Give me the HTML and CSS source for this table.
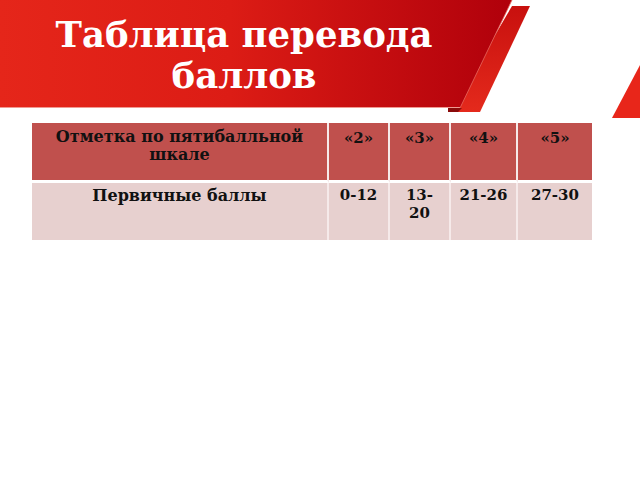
FILE: index.html
```html
<!DOCTYPE html>
<html lang="ru">
<head>
<meta charset="utf-8">
<link rel="stylesheet" href="styles.css">
</head>
<body>
<div class="slide">
  <header class="banner">
    <svg class="banner-bg" width="640" height="120" viewBox="0 0 640 120" aria-hidden="true">
      <defs>
        <linearGradient id="g" x1="0" y1="0" x2="1" y2="0">
          <stop offset="0" stop-color="#e5261a"/>
          <stop offset="0.45" stop-color="#dc1c15"/>
          <stop offset="1" stop-color="#b0000b"/>
        </linearGradient>
        <linearGradient id="g2" x1="0" y1="0" x2="0" y2="1">
          <stop offset="0" stop-color="#c8100e"/>
          <stop offset="1" stop-color="#e42a1c"/>
        </linearGradient>
      </defs>
      <polygon points="512,6 530,6 480,112 450,112" fill="url(#g2)"/>
      <polygon points="448,108 462,108 458,112 448,112" fill="#8a0a0a"/>
      <polygon points="0,0 512,0 460,108 0,108" fill="url(#g)"/>
      <line x1="0" y1="107.5" x2="460" y2="107.5" stroke="#f09a92" stroke-width="1"/>
      <line x1="512" y1="0" x2="460" y2="108" stroke="#e86a60" stroke-width="0.8"/>
      <polygon points="640,65 640,118 612,118" fill="#e8261a"/>
    </svg>
    <h1 class="title">Таблица перевода баллов</h1>
  </header>
  <table class="scores">
    <colgroup>
      <col class="c1"><col class="c2"><col class="c3"><col class="c4"><col class="c5">
    </colgroup>
    <tr class="head">
      <td class="label">Отметка по пятибалльной шкале</td>
      <td>«2»</td>
      <td>«3»</td>
      <td>«4»</td>
      <td>«5»</td>
    </tr>
    <tr class="data">
      <td class="label">Первичные баллы</td>
      <td>0-12</td>
      <td>13-20</td>
      <td>21-26</td>
      <td>27-30</td>
    </tr>
  </table>
</div>
</body>
</html>
```
FILE: styles.css
```css
html, body {
  margin: 0;
  padding: 0;
  background: #ffffff;
}
.slide {
  width: 640px;
  height: 480px;
  overflow: hidden;
  font-family: "DejaVu Serif", "Liberation Serif", serif;
}
.banner {
  position: relative;
  height: 108px;
}
.banner-bg {
  position: absolute;
  left: 0;
  top: 0;
}
.title {
  position: relative;
  margin: 0;
  width: 488px;
  padding-top: 14px;
  text-align: center;
  color: #ffffff;
  font-size: 35.5px;
  line-height: 41px;
  font-weight: bold;
}
.scores {
  margin: 15px 0 0 32px;
  width: 560px;
  border-collapse: separate;
  border-spacing: 0;
  table-layout: fixed;
}
.c1 { width: 297px; }
.c2 { width: 61px; }
.c3 { width: 61px; }
.c4 { width: 67px; }
.c5 { width: 74px; }
.scores td {
  vertical-align: top;
  text-align: center;
  font-weight: bold;
  color: #111111;
  font-size: 15px;
  line-height: 18px;
  padding: 0 7px;
  border-right: 2px solid #f6eaea;
}
.scores td:last-child {
  border-right: none;
}
.head td {
  background: #c0504d;
  height: 51px;
  padding-top: 6px;
  border-bottom: 3px solid #ffffff;
}
.data td {
  background: #e7d0cf;
  height: 53px;
  padding-top: 3px;
}
.scores td.label {
  font-size: 16px;
  line-height: 18px;
}
.head td.label {
  padding-top: 5px;
}
.data td.label {
  padding-top: 4px;
}
```
